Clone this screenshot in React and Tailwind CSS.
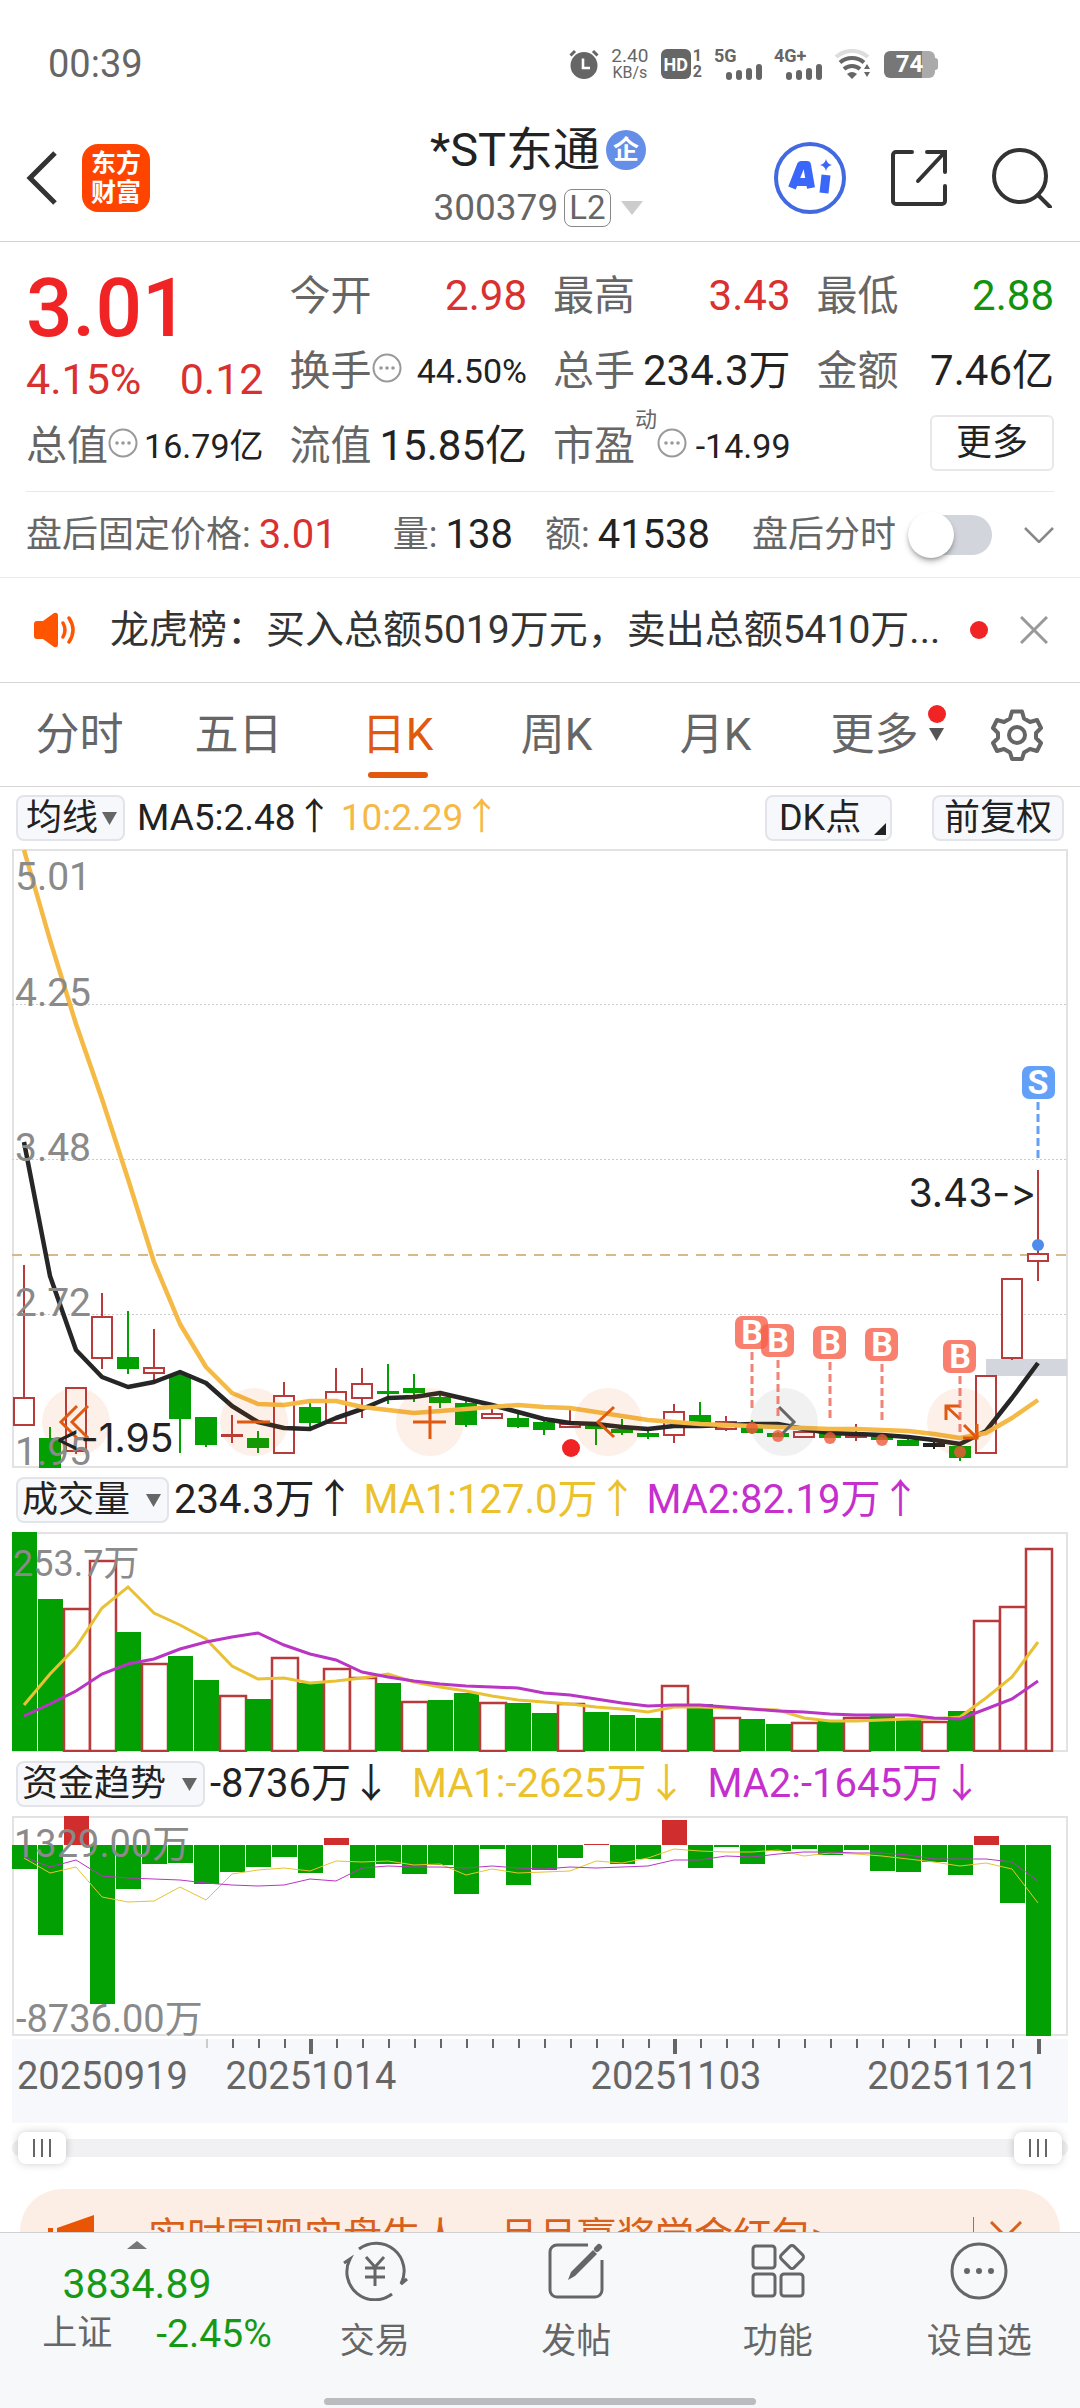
import React from 'react';

// One column per trading day, 26 units apart
const STEP = 26;
const colX = (i) => 12 + i * STEP;
const toPoints = (values) => values.map((y, i) => `${colX(i)},${y}`).join(' ');

// [direction, high, body top, body bottom, low]
const candles = [
    ['up', 416, 549, 576, 576], ['down', 578, 590, 618, 619], ['up', 539, 539, 602, 605], ['up', 444, 468, 509, 520],
    ['down', 462, 509, 519, 525], ['up', 480, 519, 524, 532], ['down', 522, 526, 569, 604], ['down', 568, 569, 595, 598],
    ['up', 566, 586, 586, 594], ['down', 582, 590, 598, 604], ['up', 533, 547, 604, 604], ['down', 553, 559, 573, 578],
    ['up', 519, 543, 574, 575], ['up', 519, 535, 549, 569], ['down', 515, 543, 544, 555], ['down', 525, 540, 543, 553],
    ['down', 546, 549, 553, 559], ['down', 552, 555, 575, 578], ['up', 558, 565, 569, 570], ['down', 564, 570, 577, 579],
    ['down', 572, 574, 580, 586], ['up', 561, 575, 578, 578], ['down', 574, 578, 579, 596], ['down', 570, 581, 583, 586],
    ['down', 581, 585, 587, 590], ['up', 555, 563, 586, 594], ['down', 553, 567, 573, 573], ['up', 567, 573, 580, 582],
    ['down', 571, 579, 583, 585], ['down', 583, 585, 587, 588], ['up', 583, 583, 588, 588], ['down', 583, 584, 588, 589],
    ['up', 575, 585, 588, 592], ['down', 584, 586, 590, 590], ['down', 588, 592, 596, 597], ['flat', 591, 595, 597, 600],
    ['down', 596, 598, 608, 612], ['up', 527, 527, 604, 605], ['up', 430, 430, 509, 511], ['up', 321, 405, 412, 432],
];

const priceMa5 = [293, 427, 501, 528, 538, 533, 523, 534, 557, 573, 579, 580, 569, 560, 549, 548, 544, 550, 556, 563,
    570, 574, 575, 578, 580, 577, 577, 576, 575, 575, 580, 584, 585, 586, 588, 591, 595, 582, 549, 514];
const priceMa10 = [1, 91, 175, 250, 330, 413, 475, 518, 544, 555, 556, 552, 552, 558, 561, 564, 562, 560, 558, 556,
    558, 559, 563, 567, 571, 573, 575, 576, 577, 578, 579, 580, 580, 581, 582, 585, 589, 584, 569, 551];

const volumeTops = [0, 67, 77, 29, 100, 132, 124, 148, 164, 167, 126, 151, 137, 146, 151, 170, 168, 161, 171, 171,
    181, 172, 180, 183, 186, 154, 172, 186, 187, 192, 191, 189, 186, 184, 187, 190, 179, 89, 75, 17];
const volumeUp = [2, 3, 5, 8, 10, 12, 13, 15, 18, 21, 25, 27, 30, 32, 35, 37, 38, 39];
const volumeMa1 = [173, 142, 115, 76, 55, 81, 93, 107, 134, 147, 146, 151, 149, 146, 142, 150, 155, 159, 164, 168,
    170, 172, 175, 177, 180, 175, 175, 176, 177, 178, 186, 189, 189, 188, 187, 187, 185, 166, 145, 110];
const volumeMa2 = [184, 172, 159, 142, 132, 127, 117, 110, 105, 101, 113, 122, 128, 140, 145, 149, 152, 154, 155, 156,
    161, 163, 167, 171, 174, 173, 173, 175, 177, 179, 180, 182, 183, 183, 183, 186, 187, 177, 167, 149];

const FUND_ZERO = 29;
const fundEnds = [53, 119, 0, 188, 73, 48, 47, 68, 56, 51, 41, 57, 22, 62, 48, 58, 49, 78, 33, 69,
    54, 42, 28, 48, 43, 4, 52, 31, 48, 35, 33, 39, 34, 55, 56, 46, 59, 20, 87, 220];
const fundMa1 = [42, 57, 51, 81, 86, 85, 71, 84, 58, 54, 52, 55, 45, 46, 45, 49, 48, 59, 53, 57,
    56, 55, 45, 47, 42, 33, 35, 36, 36, 34, 40, 37, 38, 40, 43, 46, 50, 47, 53, 87];
const fundMa2 = [41, 51, 44, 60, 62, 63, 64, 67, 69, 70, 69, 63, 65, 52, 50, 51, 51, 52, 50, 52,
    53, 51, 52, 51, 50, 44, 44, 40, 41, 38, 36, 36, 37, 37, 39, 43, 43, 43, 46, 65];

// Buy signals: [column, top of the badge]
const buySignals = [[28, 467], [29, 475], [31, 477], [33, 479], [36, 491]];

const tabs = ['分时', '五日', '日K', '周K', '月K'];

const MoreDots = () => (
    <svg className="size-[30px] shrink-0 self-start mt-2" viewBox="0 0 30 30" fill="none">
        <circle cx="15" cy="15" r="13.5" stroke="#999" strokeWidth="2" />
        <circle cx="9" cy="15" r="1.8" fill="#999" />
        <circle cx="15" cy="15" r="1.8" fill="#999" />
        <circle cx="21" cy="15" r="1.8" fill="#999" />
    </svg>
);

const Signal = ({ label }) => (
    <div className="flex w-12 flex-col">
        <span className="text-[18px] leading-[16px] font-bold">{label}</span>
        <div className="flex h-4 items-end gap-1 self-end">
            <i className="h-2 w-1.5 rounded-sm bg-[#666]" />
            <i className="h-2.5 w-1.5 rounded-sm bg-[#666]" />
            <i className="h-3 w-1.5 rounded-sm bg-[#666]" />
            <i className="h-4 w-1.5 rounded-sm bg-[#666]" />
        </div>
    </div>
);

const StatusBar = () => (
    <div className="flex h-24 items-center pt-8 pl-12 pr-[142px] text-[#666]">
        <span className="text-[38px] leading-none">00:39</span>
        <div className="ml-auto flex items-center gap-3">
            <svg className="size-[30px]" viewBox="0 0 30 30">
                <circle cx="15" cy="16.500" r="13.500" fill="#666" />
                <path d="M1.500 6.500 6 2M28.500 6.500 24 2" stroke="#666" strokeWidth="3" />
                <path d="M14 9.500v9.500h7" fill="none" stroke="#fff" strokeWidth="2.600" />
            </svg>
            <div className="flex w-[38px] flex-col items-center leading-[17px]">
                <span className="text-[19px]">2.40</span>
                <span className="text-[16px]">KB/s</span>
            </div>
            <div className="flex items-center gap-0.5">
                <span className="flex size-[30px] items-center justify-center rounded-md bg-[#666] text-[18px] font-bold text-white">HD</span>
                <div className="flex flex-col text-[16px] leading-[16px] font-bold">
                    <span>1</span>
                    <span>2</span>
                </div>
            </div>
            <Signal label="5G" />
            <Signal label="4G+" />
            <svg className="h-[30px] w-[38px]" viewBox="0 0 38 30" fill="none">
                <path d="M2 8a24 24 0 0 1 32 0" stroke="#ddd" strokeWidth="4" />
                <path d="M6 13.500a18 18 0 0 1 24 0" stroke="#666" strokeWidth="4" />
                <path d="M10 20a12 12 0 0 1 16 0" stroke="#666" strokeWidth="4" />
                <path d="M13 25q5-4 10 0l-5 5z" fill="#666" />
                <path d="M33 15l3 5h-6zM33 28l3-5h-6z" fill="#666" />
            </svg>
            <div className="flex items-center">
                <div className="flex h-[27px] w-[51px] items-center justify-center rounded-md bg-linear-to-r from-[#777] from-75% to-[#aaa] to-75%">
                    <span className="text-[24px] leading-none font-bold text-white">74</span>
                </div>
                <i className="h-3 w-[3px] rounded-r bg-[#aaa]" />
            </div>
        </div>
    </div>
);

const Header = () => (
    <header className="grid grid-cols-[1fr_auto_1fr] items-center border-b border-[#d2d2d2] pt-6 pb-1.5 pr-7 pl-6">
        <div className="flex items-center gap-6">
            <button aria-label="返回">
                <svg className="h-[56px] w-[34px]" viewBox="0 0 34 56" fill="none">
                    <path d="M31 3 6 28l25 25" stroke="#333" strokeWidth="5" />
                </svg>
            </button>
            <a href="#home" className="flex size-[68px] flex-col items-center justify-center rounded-2xl bg-[#ff4400] text-[25px] leading-[29px] font-bold text-white">
                <span>东方</span>
                <span>财富</span>
            </a>
        </div>
        <div className="flex flex-col items-center">
            <h1 className="flex h-[60px] items-center gap-1.5 text-[47px] leading-[60px] text-[#222]">
                *ST东通
                <span className="flex size-10 items-center justify-center rounded-full bg-[#648ee8] text-[26px] leading-none font-bold text-white">企</span>
            </h1>
            <button className="flex h-[55px] items-center gap-1.5 text-[37px] text-[#666]">
                300379
                <span className="rounded-lg border border-[#888] px-1 text-[33px] leading-[36px]">L2</span>
                <svg className="ml-1 h-[14px] w-[22px]" viewBox="0 0 22 14"><path d="M0 0h22L11 14z" fill="#ccc" /></svg>
            </button>
        </div>
        <div className="flex items-center justify-end gap-[44px]">
            <button aria-label="AI助手">
                <svg className="size-[72px]" viewBox="0 0 72 72" fill="none">
                    <circle cx="36" cy="36" r="34" stroke="#4169e1" strokeWidth="4" />
                    <path d="M18 46 27 23h6l4 23M23 40h12" stroke="#3b66fa" strokeWidth="8" strokeLinejoin="round" />
                    <path d="m52 33-2 18" stroke="#3b66fa" strokeWidth="9" />
                    <path d="M52 17q1 5 6 6-5 1-6 6-1-5-6-6 5-1 6-6z" fill="#3b66fa" />
                </svg>
            </button>
            <button aria-label="分享">
                <svg className="size-[58px]" viewBox="0 0 58 58" fill="none" stroke="#333" strokeWidth="4" strokeLinecap="round">
                    <path d="M22 3H6a3 3 0 0 0-3 3v46a3 3 0 0 0 3 3h46a3 3 0 0 0 3-3V37" />
                    <path d="M37 3h18v20M54 4 28 32" />
                </svg>
            </button>
            <button aria-label="搜索">
                <svg className="size-[60px]" viewBox="0 0 60 60" fill="none" stroke="#333" strokeWidth="4" strokeLinecap="round">
                    <circle cx="28" cy="28" r="26" />
                    <path d="m46 47 12 12" />
                </svg>
            </button>
        </div>
    </header>
);

const Stat = ({ label, value, sup, dots, small, tone = 'text-[#222]' }) => (
    <div className="flex h-[75px] items-center justify-between">
        <span className="flex items-center text-[41px] leading-[52px] text-[#666]">
            {label}
            {sup && <sup className="self-start text-[22px] leading-none">{sup}</sup>}
            {dots && <MoreDots />}
        </span>
        <span className={`${small ? 'text-[34px]' : 'text-[42px]'} leading-[52px] ${tone}`}>{value}</span>
    </div>
);

const Quote = () => (
    <section className="px-[26px] pt-4">
        <div className="grid grid-cols-4 gap-x-[26px]">
            <div className="row-span-2 flex flex-col pt-2">
                <strong className="text-[82px] leading-[84px] font-medium text-[#f02424]">3.01</strong>
                <div className="flex justify-between text-[43px] leading-[58px] text-[#d93030]">
                    <span>4.15%</span>
                    <span>0.12</span>
                </div>
            </div>
            <Stat label="今开" value="2.98" tone="text-[#d93030]" />
            <Stat label="最高" value="3.43" tone="text-[#d93030]" />
            <Stat label="最低" value="2.88" tone="text-[#12930f]" />
            <Stat label="换手" value="44.50%" dots small />
            <Stat label="总手" value="234.3万" />
            <Stat label="金额" value="7.46亿" />
            <Stat label="总值" value="16.79亿" dots small />
            <Stat label="流值" value="15.85亿" />
            <Stat label="市盈" sup="动" value="-14.99" dots small />
            <div className="flex h-[70px] items-center justify-end">
                <button className="rounded-md border-2 border-[#e8e8ea] px-6 text-[36px] leading-[52px] text-[#222]">更多</button>
            </div>
        </div>
        <div className="mt-2 flex h-[86px] items-center border-t border-[#e8e8e8] text-[36px] text-[#666]">
            <span>盘后固定价格:</span>
            <span className="ml-2 text-[40px] text-[#d93030]">3.01</span>
            <span className="ml-14">量:</span>
            <span className="ml-2 text-[40px] text-[#222]">138</span>
            <span className="ml-8">额:</span>
            <span className="ml-2 text-[40px] text-[#222]">41538</span>
            <label className="ml-auto flex items-center gap-3">
                盘后分时
                <input
                    type="checkbox"
                    className="flex h-10 w-[84px] appearance-none items-center rounded-full bg-[#d2d5db] before:size-[46px] before:rounded-full before:bg-white before:shadow-md before:shadow-black/30"
                />
            </label>
            <button className="ml-8" aria-label="展开">
                <svg className="h-[16px] w-[30px]" viewBox="0 0 30 16" fill="none"><path d="m1 1 14 14L29 1" stroke="#888" strokeWidth="2.500" /></svg>
            </button>
        </div>
    </section>
);

const NewsBar = () => (
    <section className="flex h-[106px] items-center border-y border-t-[#ececec] border-b-[#d6d6d6] px-8">
        <svg className="h-[36px] w-[46px] shrink-0" viewBox="0 0 46 36" fill="none">
            <path d="M2 12q0-3 3-3h6L22 1q4-1 4 3v28q0 4-4 3L11 27H5q-3 0-3-3z" fill="#ff5500" />
            <path d="M31 11q4 7 0 14M37 6q8 12 0 24" stroke="#ff5500" strokeWidth="3.500" strokeLinecap="round" />
        </svg>
        <a href="#news" className="ml-8 flex-1 truncate text-[39px] text-[#333]">龙虎榜：买入总额5019万元，卖出总额5410万...</a>
        <i className="size-[18px] shrink-0 rounded-full bg-[#f02424]" />
        <button className="ml-8 shrink-0" aria-label="关闭">
            <svg className="size-[28px]" viewBox="0 0 28 28"><path d="m1 1 26 26M27 1 1 27" stroke="#999" strokeWidth="3" /></svg>
        </button>
    </section>
);

const PeriodTabs = () => (
    <nav className="flex h-[104px] items-stretch border-b border-[#d6d6d6] text-[44px] text-[#666]">
        {tabs.map((tab) => (
            <button key={tab} className={`relative flex-1 ${tab === '日K' ? 'text-[#e0590f]' : ''}`}>
                {tab}
                {tab === '日K' && <i className="absolute bottom-2 left-1/2 h-1.5 w-15 -translate-x-1/2 rounded-full bg-[#e0590f]" />}
            </button>
        ))}
        <button className="relative flex-1">
            更多
            <i className="absolute top-[22px] right-2 size-[18px] rounded-full bg-[#f02424]" />
            <svg className="absolute top-[45px] right-2.5 h-[13px] w-[15px]" viewBox="0 0 15 13"><path d="M0 0h15L7.500 13z" fill="#555" /></svg>
        </button>
        <button className="flex w-[126px] items-center justify-center" aria-label="设置">
            <svg className="size-[52px]" viewBox="0 0 52 52" fill="none" stroke="#666" strokeWidth="4">
                <path d="M21 2.500h10l2 7 6 3.500 7-2 4 8-5 5v5l5 5-4 8-7-2-6 3.500-2 6.500H21l-2-6.500-6-3.500-7 2-4-8 5-5v-5l-5-5 4-8 7 2 6-3.500z" strokeLinejoin="round" />
                <circle cx="26" cy="26" r="8" />
            </svg>
        </button>
    </nav>
);

const IndicatorSelect = ({ label, option }) => (
    <span className="relative flex">
        <select aria-label={label} className="h-[46px] appearance-none rounded-lg border-2 border-[#e2e4e9] bg-[#f7f8fb] pl-1 pr-9 text-[36px] leading-[42px] text-[#222]">
            <option>{option}</option>
        </select>
        <svg className="pointer-events-none absolute top-[17px] right-2 h-[13px] w-[15px]" viewBox="0 0 15 13"><path d="M0 0h15L7.500 13z" fill="#666" /></svg>
    </span>
);

const CircleButton = ({ x, tone = '#e0590f', children }) => (
    <g>
        <circle cx={x} cy="573" r="34" fill={tone} fillOpacity="0.09" />
        <g fill="none" stroke={tone} strokeWidth="3">{children}</g>
    </g>
);

const Candle = ({ i, candle }) => {
    const [dir, high, top, bottom, low] = candle;
    const x = colX(i);
    const color = dir === 'up' ? '#b93a3a' : dir === 'down' ? '#02a002' : '#222';
    return (
        <g stroke={color} strokeWidth="2">
            <path d={`M${x} ${high}V${top}M${x} ${bottom}V${low}`} />
            <rect x={x - 10} y={top} width="20" height={Math.max(bottom - top, 1)} fill={dir === 'up' ? '#fff' : color} />
        </g>
    );
};

const PriceChart = () => (
    <svg className="block h-auto w-full" viewBox="0 0 1056 619" role="img" aria-label="日K线图">
        <rect x="1" y="1" width="1054" height="617" fill="#fff" stroke="#e2e2e4" strokeWidth="2" />
        <path d="M0 155.500H1056M0 310.500H1056M0 465.500H1056" stroke="#ccc" strokeDasharray="2 2" />
        <path d="M0 406H1056" stroke="#d9b98c" strokeWidth="2" strokeDasharray="10 8" />
        <rect x="974" y="510" width="81" height="17" fill="#d3d6dc" />
        {candles.map((candle, i) => <Candle key={i} i={i} candle={candle} />)}
        <polyline points={toPoints(priceMa5)} fill="none" stroke="#262626" strokeWidth="4.500" strokeLinejoin="round" />
        <polyline points={toPoints(priceMa10)} fill="none" stroke="#f5b946" strokeWidth="4.500" strokeLinejoin="round" />

        <CircleButton x={64}><path d="m65 557-16 16 16 16M76 557l-16 16 16 16" /></CircleButton>
        <CircleButton x={242}><path d="M225 573h33" /></CircleButton>
        <CircleButton x={418}><path d="M401 573h33M418 557v33" /></CircleButton>
        <CircleButton x={596}><path d="m602 558-16 15 16 15" /></CircleButton>
        <CircleButton x={772} tone="#666"><path d="m767 558 15 15-15 15" /></CircleButton>
        <CircleButton x={949}><path d="M934 571v-14h14M935 558l13 12M965 575v14h-14M964 588l-12-12" /></CircleButton>
        <circle cx="559" cy="599" r="9" fill="#f02424" />

        {buySignals.map(([i, y]) => (
            <g key={i} opacity="0.8">
                <rect x={colX(i) - 17} y={y} width="33" height="33" rx="7" fill="#f8604c" />
                <text x={colX(i)} y={y + 28} textAnchor="middle" className="fill-white text-[34px] font-bold">B</text>
                <path d={`M${colX(i)} ${y + 36}v56`} stroke="#ee6655" strokeWidth="3" strokeDasharray="8 4" />
                <circle cx={colX(i)} cy={y + 112} r="6" fill="#f05a3a" />
            </g>
        ))}
        <rect x="1010" y="217" width="33" height="33" rx="7" fill="#63a1f8" />
        <text x="1026" y="245" textAnchor="middle" className="fill-white text-[34px] font-bold">S</text>
        <path d="M1026 253v56" stroke="#63a1f8" strokeWidth="3" strokeDasharray="8 4" />
        <circle cx="1026" cy="396" r="6" fill="#4d8cec" />

        <g className="fill-[#8a8a8a] text-[39px]">
            <text x="3" y="41">5.01</text>
            <text x="3" y="157">4.25</text>
            <text x="3" y="312">3.48</text>
            <text x="3" y="467">2.72</text>
            <text x="3" y="616">1.95</text>
        </g>
        <g className="fill-[#222] font-['Inter',sans-serif] text-[39px] [font-variant-ligatures:none]">
            <text x="43" y="603">&lt;-1.95</text>
            <text x="1024" y="358" textAnchor="end">3.43-&gt;</text>
        </g>
    </svg>
);

const VolumeChart = () => (
    <svg className="block h-auto w-full" viewBox="0 0 1056 220" role="img" aria-label="成交量图">
        <rect x="1" y="1" width="1054" height="218" fill="#fff" stroke="#e2e2e4" strokeWidth="2" />
        {volumeTops.map((top, i) => (volumeUp.includes(i) ? (
            <rect key={i} x={colX(i) - 12} y={top} width="26" height={219 - top} fill="#fff" stroke="#b93a3a" strokeWidth="2.500" />
        ) : (
            <rect key={i} x={colX(i) - 12} y={top} width="25" height={219 - top} fill="#02a002" />
        )))}
        <polyline points={toPoints(volumeMa1)} fill="none" stroke="#e8c234" strokeWidth="3" />
        <polyline points={toPoints(volumeMa2)} fill="none" stroke="#b935c4" strokeWidth="3" />
        <text x="1" y="44" className="fill-[#8a8a8a] text-[36px]">253.7万</text>
    </svg>
);

const FundChart = () => (
    <svg className="block h-auto w-full" viewBox="0 0 1056 220" role="img" aria-label="资金趋势图">
        <rect x="1" y="1" width="1054" height="218" fill="#fff" stroke="#e2e2e4" strokeWidth="2" />
        {fundEnds.map((end, i) => (
            <rect
                key={i}
                x={colX(i) - 12}
                y={Math.min(end, FUND_ZERO)}
                width="25"
                height={Math.abs(end - FUND_ZERO)}
                fill={end < FUND_ZERO ? '#d02e2e' : '#02a002'}
            />
        ))}
        <polyline points={toPoints(fundMa1)} fill="none" stroke="#e8c234" />
        <polyline points={toPoints(fundMa2)} fill="none" stroke="#b935c4" />
        <g className="fill-[#8a8a8a] text-[38px]">
            <text x="2" y="41">1329.00万</text>
            <text x="4" y="216">-8736.00万</text>
        </g>
    </svg>
);

const DateAxis = () => (
    <svg className="mt-[3px] block h-auto w-full" viewBox="0 0 1056 84" role="img" aria-label="日期轴">
        <rect width="1056" height="84" fill="#f7f8fb" />
        {candles.map((_, i) => {
            if (i < 7) return null;
            const major = i === 11 || i === 25 || i === 39;
            return <path key={i} d={`M${colX(i) + 1} 0v${major ? 15 : 9}`} stroke={i === 7 ? '#ccc' : '#666'} strokeWidth={major ? 4 : 2} />;
        })}
        <g className="fill-[#666] text-[38px]">
            <text x="5" y="50">20250919</text>
            <text x="299" y="50" textAnchor="middle">20251014</text>
            <text x="664" y="50" textAnchor="middle">20251103</text>
            <text x="1026" y="50" textAnchor="end">20251121</text>
        </g>
    </svg>
);

const rangeClass = "h-[18px] min-w-0 flex-1 appearance-none bg-[#f1f1f4] [&::-webkit-slider-thumb]:h-[32px] [&::-webkit-slider-thumb]:w-[48px] [&::-webkit-slider-thumb]:appearance-none [&::-webkit-slider-thumb]:rounded-lg [&::-webkit-slider-thumb]:bg-white [&::-webkit-slider-thumb]:bg-[repeating-linear-gradient(90deg,#666_0_2px,transparent_2px_8px)] [&::-webkit-slider-thumb]:bg-[length:18px_18px] [&::-webkit-slider-thumb]:bg-center [&::-webkit-slider-thumb]:bg-no-repeat [&::-webkit-slider-thumb]:shadow-[0_0_8px_rgba(0,0,0,0.2)]";

const RangeSlider = () => (
    <div className="flex h-[66px] items-center pb-4">
        <input type="range" aria-label="开始日期" defaultValue="0" className={`${rangeClass} rounded-l-full pl-1.5`} />
        <input type="range" aria-label="结束日期" defaultValue="100" className={`${rangeClass} rounded-r-full pr-1.5`} />
    </div>
);

const Banner = () => (
    <a href="#promo" className="mx-5 flex h-24 items-center rounded-[42px] bg-[#fceee5] pl-7 pr-[38px] text-[39px] text-[#d9601a]">
        <svg className="h-[44px] w-[46px]" viewBox="0 0 46 44" fill="#ea5504"><path d="M0 13h5v18H0zM9 13 46 0v44L9 31z" /></svg>
        <span className="ml-[54px] flex-1 truncate">实时围观实盘牛人，月月赢奖学金红包&gt;</span>
        <i className="h-[40px] w-px bg-[#d9601a]" />
        <svg className="ml-4 size-[32px]" viewBox="0 0 32 32"><path d="m1 1 30 30M31 1 1 31" stroke="#d9601a" strokeWidth="3" /></svg>
    </a>
);

const navItems = [
    {
        label: '交易',
        icon: <path d="M17 8a28 28 0 0 1 42 35l6-5M50 53A28 28 0 0 1 8 18l-6 4M24 16l9 10 9-10M33 26v19M23 27h20M23 36h20" />,
    },
    {
        label: '发帖',
        icon: (
            <>
                <path d="M45 4H14a7 7 0 0 0-7 7v38a7 7 0 0 0 7 7h38a7 7 0 0 0 7-7V19" />
                <path d="m25 39 3-8 22-22 4 4-22 22z" fill="#666" stroke="none" />
                <path d="m54 8 2-2" strokeWidth="6" strokeLinecap="round" />
            </>
        ),
    },
    {
        label: '功能',
        icon: (
            <>
                <rect x="8" y="5" width="22" height="22" rx="3" />
                <rect x="8" y="33" width="22" height="22" rx="3" />
                <rect x="36" y="33" width="22" height="22" rx="3" />
                <rect x="38" y="7" width="18" height="18" rx="3" transform="rotate(45 47 16)" />
            </>
        ),
    },
    {
        label: '设自选',
        icon: (
            <>
                <circle cx="33" cy="30" r="27" />
                <g fill="#666" stroke="none">
                    <circle cx="21" cy="30" r="3" />
                    <circle cx="33" cy="30" r="3" />
                    <circle cx="45" cy="30" r="3" />
                </g>
            </>
        ),
    },
];

const BottomNav = () => (
    <footer className="shrink-0 border-t border-[#cfcfd2] bg-[#f7f8fa] pb-[3px]">
        <div className="flex h-[165px]">
            <button className="flex w-[274px] flex-col items-center pt-2 text-[#169a16]">
                <svg className="h-2 w-5" viewBox="0 0 20 8"><path d="M0 8h20L10 0z" fill="#777" /></svg>
                <span className="mt-2 text-[41px] leading-[54px]">3834.89</span>
                <span className="flex items-center gap-11 pl-10 text-[39px] leading-[46px]">
                    <span className="text-[35px] text-[#666]">上证</span>
                    -2.45%
                </span>
            </button>
            {navItems.map(({ label, icon }) => (
                <button key={label} className="flex flex-1 flex-col items-center pt-2 text-[35px] leading-[50px] text-[#666]">
                    <svg className="mb-4 h-[60px] w-[66px]" viewBox="0 0 66 60" fill="none" stroke="#666" strokeWidth="3">{icon}</svg>
                    {label}
                </button>
            ))}
        </div>
        <div className="mx-auto h-[7px] w-[40%] rounded-full bg-[#bbbcbf]" />
    </footer>
);

const App = () => {
    return (
        <div className="flex h-screen flex-col bg-white font-['Roboto','Noto_Sans_CJK_SC',sans-serif]">
            <main className="min-h-0 flex-1 overflow-y-auto [scrollbar-width:none]">
                <StatusBar />
                <Header />
                <Quote />
                <NewsBar />
                <PeriodTabs />

                <section className="px-3">
                    {/* Moving averages */}
                    <div className="flex h-[62px] items-center px-1 text-[37px]">
                        <span className="relative flex">
                            <select aria-label="主图指标" className="h-[46px] appearance-none rounded-lg border-2 border-[#e2e4e9] bg-[#f7f8fb] pl-2 pr-6 text-[36px] leading-[42px] text-[#222]">
                                <option>均线</option>
                            </select>
                            <svg className="pointer-events-none absolute top-[17px] right-2 h-[13px] w-[15px]" viewBox="0 0 15 13"><path d="M0 0h15L7.500 13z" fill="#666" /></svg>
                        </span>
                        <span className="ml-3 text-[#222]">MA5:2.48↑</span>
                        <span className="ml-2 text-[#f5b946]">10:2.29↑</span>
                        <span className="relative ml-auto flex">
                            <select aria-label="买卖点" className="h-[46px] appearance-none rounded-lg border-2 border-[#e2e4e9] bg-[#f7f8fb] pl-3 pr-7 text-[36px] leading-[42px] text-[#222]">
                                <option>DK点</option>
                            </select>
                            <svg className="pointer-events-none absolute right-1.5 bottom-1.5 size-[12px]" viewBox="0 0 12 12"><path d="M12 0v12H0z" fill="#222" /></svg>
                        </span>
                        <button className="ml-10 rounded-lg border-2 border-[#e2e4e9] bg-[#f7f8fb] px-2.5 text-[36px] leading-[42px] text-[#222]">前复权</button>
                    </div>
                    <PriceChart />

                    {/* Volume */}
                    <div className="flex h-[64px] items-center gap-[5px] px-1 text-[40px]">
                        <IndicatorSelect label="副图指标一" option="成交量" />
                        <span className="text-[#222]">234.3万↑</span>
                        <span className="ml-1 text-[#ebc22d]">MA1:127.0万↑</span>
                        <span className="ml-1 text-[#c42fce]">MA2:82.19万↑</span>
                    </div>
                    <VolumeChart />

                    {/* Money flow */}
                    <div className="flex h-[64px] items-center gap-[5px] px-1 text-[40px]">
                        <IndicatorSelect label="副图指标二" option="资金趋势" />
                        <span className="text-[#222]">-8736万↓</span>
                        <span className="ml-4 text-[#ebc22d]">MA1:-2625万↓</span>
                        <span className="ml-4 text-[#c42fce]">MA2:-1645万↓</span>
                    </div>
                    <FundChart />
                    <DateAxis />
                    <RangeSlider />
                </section>
                <Banner />
            </main>
            <BottomNav />
        </div>
    );
};

export default App;
